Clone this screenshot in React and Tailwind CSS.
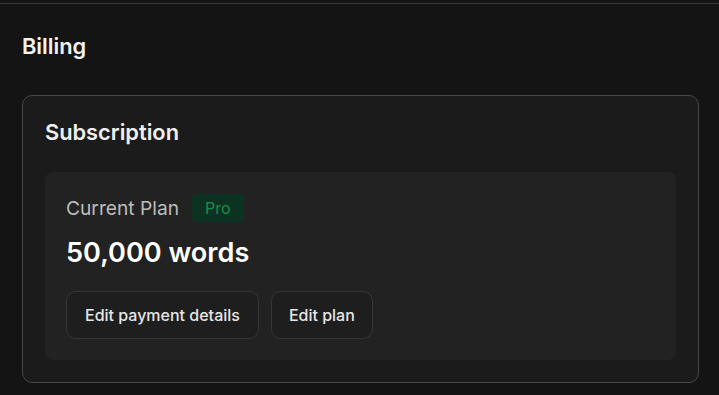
import React from 'react';

const Billing = () => {
    return (
        <div className="w-full h-[395px] overflow-hidden bg-[#141414] font-['Inter','Liberation_Sans',sans-serif]">
            <div className="h-[4px] border-b border-[#3b3b3b]" />
            <div className="pl-[22px] pr-[20px]">
                <h1 className="mt-[28px] h-[28px] text-[21.8px] leading-[28px] font-semibold text-[#f2f2f2]">
                    Billing
                </h1>

                <div className="mt-[35px] rounded-[10px] border border-[#474747] bg-[#1b1b1b] px-[22px] pt-[22px] pb-[22px]">
                    <h2 className="h-[28px] text-[21.8px] leading-[28px] font-semibold text-[#f0f0f0]">
                        Subscription
                    </h2>

                    <div className="mt-[26px] rounded-lg bg-[#222222] px-[21px] pt-[22px] pb-[21px]">
                        <div className="flex items-center gap-[13px] h-[28px]">
                            <span className="text-[19.2px] leading-[28px] text-[#bdbdbd]">Current Plan</span>
                            <span className="h-[28px] px-[13px] rounded-[4px] bg-[#0c3221] text-[16px] leading-[28px] text-[#1c8c4c]">
                                Pro
                            </span>
                        </div>

                        <div className="mt-[13px] h-[36px] text-[27.1px] leading-[36px] font-semibold text-white">
                            50,000 words
                        </div>

                        <div className="mt-[20px] flex gap-[12px]">
                            <button className="h-[48px] px-[18px] rounded-[10px] border border-[#363636] bg-[#1e1e1e] text-[16px] font-medium text-[#e6e6e6]">
                                Edit payment details
                            </button>
                            <button className="h-[48px] px-[17px] rounded-[10px] border border-[#363636] bg-[#1e1e1e] text-[16px] font-medium text-[#e6e6e6]">
                                Edit plan
                            </button>
                        </div>
                    </div>
                </div>
            </div>
        </div>
    );
};

export default function App() {
    return <Billing />;
}
